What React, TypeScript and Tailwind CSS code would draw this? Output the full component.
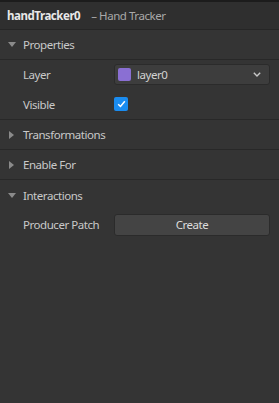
import React from "react";

const Down = () => (
  <svg width="8" height="5" viewBox="0 0 8 5" className="shrink-0">
    <path d="M0 0 L8 0 L4 5 Z" fill="#8a8a8a" />
  </svg>
);
const Right = () => (
  <svg width="5" height="8" viewBox="0 0 5 8" className="shrink-0">
    <path d="M0 0 L5 4 L0 8 Z" fill="#8a8a8a" />
  </svg>
);

function Section({ title, open }: { title: string; open: boolean }) {
  return (
    <div className="h-[30px] flex items-center border-b border-[#282828]">
      <div className="w-[23px] flex justify-center pl-[0px]">
        {open ? <Down /> : <Right />}
      </div>
      <span className="text-[#c9c9c9] pt-[1px]">{title}</span>
    </div>
  );
}

export default function App() {
  return (
    <div
      className="w-[279px] h-[403px] bg-[#343434] text-[11.5px] tracking-[-0.45px] flex flex-col"
      style={{ fontFamily: '"Noto Sans", "Open Sans", sans-serif' }}
    >
      <div className="h-[2px] bg-[#1c1c1c]" />
      <div className="h-[28px] flex items-center pl-[7px] bg-[#2f2f2f] border-b border-[#262626]">
        <span className="font-bold text-[#e8e8e8]">handTracker0</span>
        <span className="ml-[11px] text-[#a9a9a9]">– Hand Tracker</span>
      </div>
      <Section title="Properties" open />
      <div className="h-[60px] flex flex-col border-b border-[#282828]">
        <div className="h-[30px] flex items-center">
          <span className="w-[114px] pl-[23px] text-[#c9c9c9]">Layer</span>
          <div className="w-[156px] h-[21px] flex items-center rounded-[3px] bg-[#3d3d3d] border border-[#2b2b2b] pl-[3px] pr-[8px]">
            <div className="w-[13px] h-[13px] rounded-[2px] bg-[#8a6fd3]" />
            <span className="ml-[6px] text-[#d2d2d2]">layer0</span>
            <svg width="8" height="5" viewBox="0 0 8 5" className="ml-auto">
              <path d="M0.8 0.8 L4 4 L7.2 0.8" stroke="#c8c8c8" strokeWidth="1.4" fill="none" />
            </svg>
          </div>
        </div>
        <div className="h-[30px] flex items-center">
          <span className="w-[114px] pl-[23px] text-[#c9c9c9]">Visible</span>
          <div className="w-[14px] h-[14px] rounded-[2px] bg-[#1a8cf0] flex items-center justify-center">
            <svg width="9" height="8" viewBox="0 0 9 8">
              <path d="M1.2 4.2 L3.5 6.5 L7.8 1.2" stroke="#ffffff" strokeWidth="1.5" fill="none" />
            </svg>
          </div>
        </div>
      </div>
      <Section title="Transformations" open={false} />
      <Section title="Enable For" open={false} />
      <div className="h-[30px] flex items-center">
        <div className="w-[23px] flex justify-center">
          <Down />
        </div>
        <span className="text-[#c9c9c9] pt-[1px]">Interactions</span>
      </div>
      <div className="h-[30px] flex items-center">
        <span className="w-[114px] pl-[23px] text-[#c9c9c9]">Producer Patch</span>
        <div className="w-[156px] h-[22px] flex items-center justify-center rounded-[3px] bg-[#444444] border border-[#2b2b2b] text-[#dcdcdc]">
          Create
        </div>
      </div>
    </div>
  );
}
